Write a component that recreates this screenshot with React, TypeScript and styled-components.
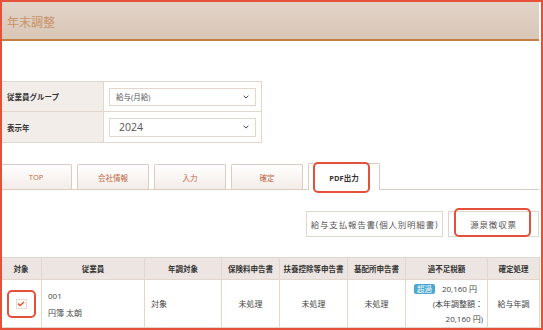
import styled, { createGlobalStyle } from "styled-components";

const RED = "#e4503a";
const LINE = "#e3d6cd";

const GlobalStyle = createGlobalStyle`
  html, body {
    margin: 0;
    padding: 0;
    background: #fff;
  }
  body {
    font-family: "Open Sans", "Noto Sans CJK JP", sans-serif;
    color: #444;
  }
`;

const Page = styled.div`
  position: relative;
  width: 543px;
  height: 330px;
  overflow: hidden;
  box-sizing: border-box;
  padding-right: 4px;
  background: #fff;
  display: flex;
  flex-direction: column;
`;

// red frame drawn around the whole capture
const Frame = styled.div`
  position: absolute;
  inset: 0;
  border: 2px solid ${RED};
  pointer-events: none;
`;

const Header = styled.div`
  height: 41px;
  flex: none;
  box-sizing: border-box;
  padding: 4px 0 0 7px;
  display: flex;
  align-items: center;
  background: linear-gradient(#e3d4c9, #d9c7b7);
  border-bottom: 2px solid #c27d42;
  color: #c9946a;
  font-size: 12px;
`;

const FormTable = styled.table`
  margin-top: 40px;
  width: 262px;
  border-collapse: collapse;
  td {
    height: 29px;
    border: 1px solid ${LINE};
    padding: 0;
  }
  tr + tr td {
    height: 30px;
  }
`;

const Label = styled.td`
  width: 103px;
  background: #f3ede9;
  box-sizing: border-box;
  padding-left: 6px !important;
  font-size: 7.5px;
  font-weight: bold;
  color: #333;
`;

const ValueCell = styled.td`
  padding: 0 5px 0 5px !important;
`;

const Select = styled.div<{ big?: boolean }>`
  height: ${(p) => (p.big ? 19 : 18)}px;
  box-sizing: border-box;
  border: 1px solid ${LINE};
  display: flex;
  align-items: center;
  justify-content: space-between;
  padding: 0 6px 0 ${(p) => (p.big ? 9 : 6)}px;
  font-size: ${(p) => (p.big ? 10.5 : 7.5)}px;
  color: #555;
`;

const TabBar = styled.div`
  margin-top: 20px;
  display: flex;
  align-items: flex-end;
  gap: 5px;
  border-bottom: 1px solid #dccbc0;
`;

const Tab = styled.div<{ active?: boolean }>`
  position: relative;
  width: 72px;
  height: ${(p) => (p.active ? 27 : 25)}px;
  box-sizing: border-box;
  margin-bottom: ${(p) => (p.active ? -1 : 0)}px;
  border: 1px solid #dccbc0;
  border-bottom: ${(p) => (p.active ? "none" : "0")};
  border-radius: 2px 2px 0 0;
  background: ${(p) => (p.active ? "#fff" : "linear-gradient(#fff, #f3ece8)")};
  display: flex;
  align-items: center;
  justify-content: center;
  font-size: 7.5px;
  font-weight: ${(p) => (p.active ? "bold" : "normal")};
  color: ${(p) => (p.active ? "#333" : "#c0673f")};
`;

// red annotation boxes laid over the marked controls
const Mark = styled.div<{ l: number; r: number; t: number; b: number }>`
  position: absolute;
  left: ${(p) => p.l}px;
  right: ${(p) => p.r}px;
  top: ${(p) => p.t}px;
  bottom: ${(p) => p.b}px;
  border: 2px solid ${RED};
  border-radius: 5px;
  pointer-events: none;
`;

const Actions = styled.div`
  margin-top: 21px;
  display: flex;
  justify-content: flex-end;
  gap: 5px;
`;

const Button = styled.div<{ w: number }>`
  position: relative;
  width: ${(p) => p.w}px;
  height: 26px;
  box-sizing: border-box;
  border: 1px solid ${LINE};
  background: #fff;
  display: flex;
  align-items: center;
  justify-content: center;
  font-size: 8.5px;
  letter-spacing: 0.8px;
  color: #555;
`;

const Grid = styled.table`
  margin-top: 20px;
  width: 539px;
  table-layout: fixed;
  border-collapse: collapse;
  th,
  td {
    border: 1px solid ${LINE};
    padding: 0;
    text-align: center;
  }
  th {
    height: 21px;
    background: #ede5e1;
    font-size: 7.5px;
    font-weight: bold;
    color: #333;
  }
  td {
    height: 47px;
    font-size: 8px;
    color: #444;
  }
`;

const LeftCell = styled.td`
  text-align: left !important;
  padding-left: 6px !important;
  line-height: 17px;
`;

const TaxCell = styled.td`
  padding: 0 4px 0 8px !important;
  line-height: 15px;
  text-align: right !important;
`;

const TaxTop = styled.div`
  display: flex;
  justify-content: space-between;
  align-items: center;
  padding-right: 6px;
`;

const Badge = styled.span`
  background: #4ba8cf;
  color: #fff;
  font-size: 7.5px;
  line-height: 10px;
  padding: 0 3px;
  border-radius: 2px;
`;

const CheckMark = styled.div`
  width: 29px;
  height: 28px;
  margin: 0 auto;
  box-sizing: border-box;
  border: 2px solid ${RED};
  border-radius: 5px;
  display: flex;
  align-items: center;
  justify-content: center;
`;

const CheckBox = styled.div`
  width: 11px;
  height: 10px;
  box-sizing: border-box;
  border: 1px solid #eadbd2;
  background: #fdf9f7;
  display: flex;
  align-items: center;
  justify-content: center;
`;

const Chevron = () => (
  <svg width="6" height="4" viewBox="0 0 6 4">
    <polyline points="0.6,0.7 3,3.1 5.4,0.7" fill="none" stroke="#444" strokeWidth="1" />
  </svg>
);

const columns = [
  ["対象", 41],
  ["従業員", 103],
  ["年調対象", 77],
  ["保険料申告書", 58],
  ["扶養控除等申告書", 68],
  ["基配所申告書", 58],
  ["過不足税額", 82],
  ["確定処理", 52],
] as const;

const tabs = ["TOP", "会社情報", "入力", "確定", "PDF出力"];

export default function App() {
  return (
    <Page>
      <GlobalStyle />
      <Header>年末調整</Header>

      <FormTable>
        <tbody>
          <tr>
            <Label>従業員グループ</Label>
            <ValueCell>
              <Select>
                <span>給与(月給)</span>
                <Chevron />
              </Select>
            </ValueCell>
          </tr>
          <tr>
            <Label>表示年</Label>
            <ValueCell>
              <Select big>
                <span>2024</span>
                <Chevron />
              </Select>
            </ValueCell>
          </tr>
        </tbody>
      </FormTable>

      <TabBar>
        {tabs.map((t) => (
          <Tab key={t} active={t === "PDF出力"}>
            {t}
            {t === "PDF出力" && <Mark l={4} r={9} t={-2} b={-3} />}
          </Tab>
        ))}
      </TabBar>

      <Actions>
        <Button w={137}>給与支払報告書(個人別明細書)</Button>
        <Button w={91}>
          源泉徴収票
          <Mark l={5} r={7} t={-4} b={-1} />
        </Button>
      </Actions>

      <Grid>
        <colgroup>
          {columns.map(([name, w]) => (
            <col key={name} style={{ width: w }} />
          ))}
        </colgroup>
        <thead>
          <tr>
            {columns.map(([name]) => (
              <th key={name}>{name}</th>
            ))}
          </tr>
        </thead>
        <tbody>
          <tr>
            <td>
              <CheckMark>
                <CheckBox>
                  <svg width="8" height="6" viewBox="0 0 8 6">
                    <polyline points="1,2.6 3.2,4.6 7,1" fill="none" stroke="#e35c3a" strokeWidth="1.5" />
                  </svg>
                </CheckBox>
              </CheckMark>
            </td>
            <LeftCell>
              <div>001</div>
              <div>円簿 太朗</div>
            </LeftCell>
            <LeftCell>対象</LeftCell>
            <td>未処理</td>
            <td>未処理</td>
            <td>未処理</td>
            <TaxCell>
              <TaxTop>
                <Badge>超過</Badge>
                <span>20,160 円</span>
              </TaxTop>
              <div>(本年調整額：</div>
              <div>20,160 円)</div>
            </TaxCell>
            <td>給与年調</td>
          </tr>
        </tbody>
      </Grid>

      <Frame />
    </Page>
  );
}
